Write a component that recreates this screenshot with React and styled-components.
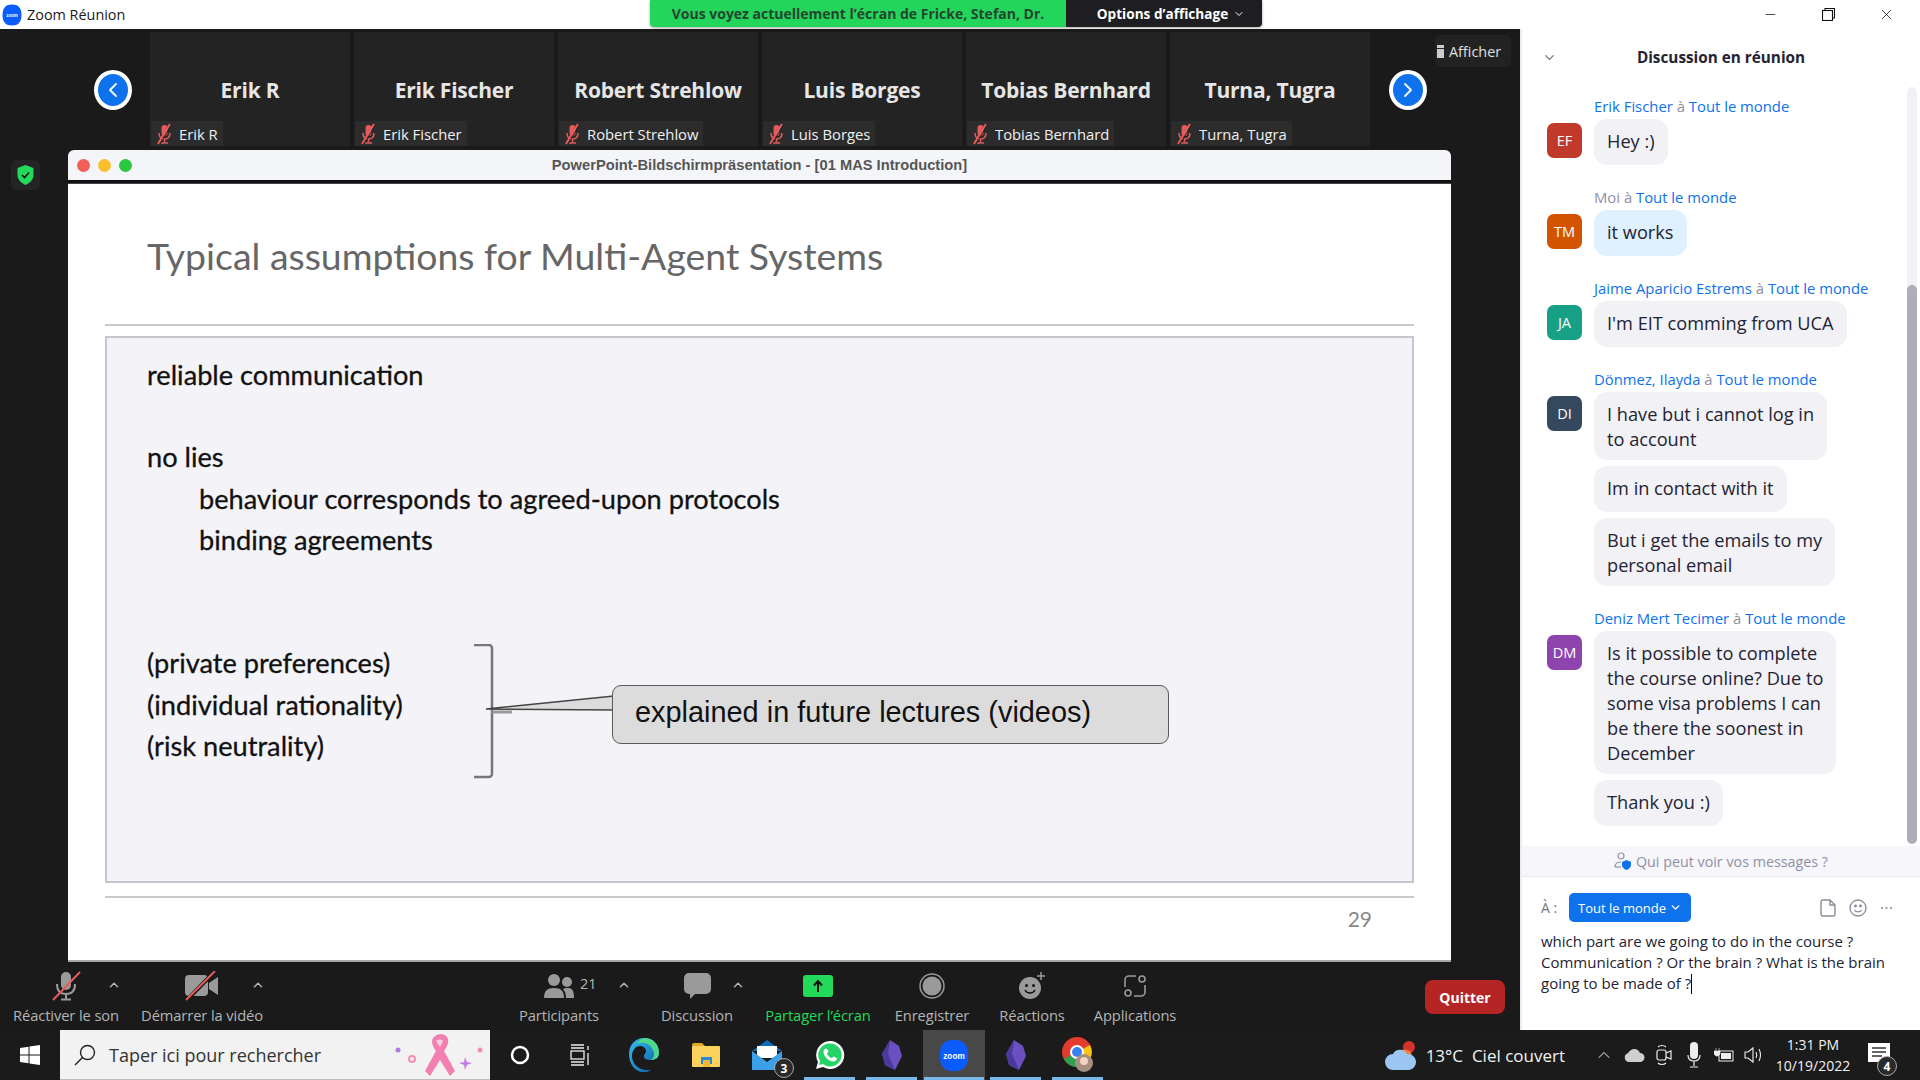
import React from 'react'
import styled, { createGlobalStyle } from 'styled-components'
import { ChevronDown, ChevronUp, ChevronLeft, ChevronRight, Minus, X } from 'lucide-react'

const ui = '"Open Sans", "Noto Sans", "Liberation Sans", sans-serif'
const slideFont = 'Lato, "Open Sans", sans-serif'

const Global = createGlobalStyle`
  html, body { margin: 0; padding: 0; background: #1a1a1a; }
  * { box-sizing: border-box; }
  body { font-family: ${ui}; overflow: hidden; }
`

const Page = styled.div`
  width: 1920px;
  height: 1080px;
  display: flex;
  flex-direction: column;
  overflow: hidden;
`

const TitleBar = styled.header`
  height: 29px;
  flex: none;
  background: #fff;
  display: flex;
  align-items: flex-start;
`
const AppName = styled.div`
  width: 650px;
  height: 29px;
  display: flex;
  align-items: center;
  gap: 5px;
  padding-left: 2px;
  font-size: 14.4px;
  color: #1a1a1a;
`
const Banner = styled.div`
  height: 27px;
  display: flex;
  border-radius: 0 0 4px 4px;
  overflow: hidden;
  box-shadow: 0 1px 3px rgba(0, 0, 0, 0.35);
  font-size: 14px;
  font-weight: 700;
`
const BannerGreen = styled.div`
  width: 416px;
  background: #23d55b;
  color: #24452f;
  display: flex;
  align-items: center;
  justify-content: center;
`
const BannerDark = styled.div`
  width: 196px;
  background: #1e1e22;
  color: #fff;
  display: flex;
  align-items: center;
  justify-content: center;
  gap: 5px;
  padding-left: 14px;
  font-size: 13.6px;
`
const WinControls = styled.div`
  margin-left: auto;
  margin-right: 5px;
  display: flex;
  height: 29px;
`
const WinButton = styled.div`
  width: 58px;
  height: 29px;
  display: flex;
  align-items: center;
  justify-content: center;
  color: #111;
`

const Body = styled.div`
  flex: 1;
  display: flex;
  min-height: 0;
`
const Meeting = styled.main`
  width: 1520px;
  background: #1a1a1a;
  display: flex;
  flex-direction: column;
  position: relative;
`

const ThumbRow = styled.section`
  height: 121px;
  flex: none;
  display: flex;
  align-items: flex-start;
  padding: 3px 0 0 94px;
`
const Arrow = styled.div`
  width: 38px;
  height: 40px;
  margin: 38px 18px 0 0;
  flex: none;
  border-radius: 50%;
  border: 4px solid #fff;
  background: #0e72ed;
  color: #fff;
  display: flex;
  align-items: center;
  justify-content: center;
`
const Tiles = styled.div`
  display: flex;
  gap: 4px;
  margin-right: 19px;
`
const Tile = styled.div`
  width: 200px;
  height: 114px;
  background: #232323;
  display: flex;
  flex-direction: column;
`
const TileName = styled.div`
  flex: 1;
  display: flex;
  align-items: center;
  justify-content: center;
  padding-top: 26px;
  color: #e6e6e6;
  font-size: 21px;
  font-weight: 700;
  letter-spacing: -0.2px;
`
const Chip = styled.div`
  align-self: flex-start;
  height: 25px;
  display: flex;
  align-items: center;
  gap: 6px;
  padding: 0 5px;
  margin-left: 1px;
  background: #2c2c2c;
  color: #f0f0f0;
  font-size: 14.8px;
`
const ShowButton = styled.div`
  margin: 3px 0 0 -10px;
  width: 76px;
  height: 32px;
  background: #222;
  border-radius: 6px;
  color: #e0e0e0;
  font-size: 14.4px;
  display: flex;
  align-items: center;
  gap: 5px;
  padding-left: 2px;
`
const Bars = styled.span`
  width: 7px;
  height: 13px;
  border-top: 3px solid #ccc;
  background: #ccc;
  box-shadow: inset 0 1px 0 #222;
`
const ShieldBadge = styled.div`
  position: absolute;
  left: 11px;
  top: 131px;
  width: 29px;
  height: 30px;
  background: #242424;
  border-radius: 6px;
  display: flex;
  align-items: center;
  justify-content: center;
`

const Stage = styled.section`
  height: 812px;
  flex: none;
  padding-left: 68px;
`
const ShareWindow = styled.div`
  width: 1383px;
  height: 812px;
  display: flex;
  flex-direction: column;
  border-bottom: 2px solid #a8a8a8;
`
const MacBar = styled.div`
  height: 30px;
  flex: none;
  background: #f4f5f9;
  border-radius: 6px 6px 0 0;
  display: flex;
  align-items: center;
  gap: 8px;
  padding-left: 9px;
  position: relative;
`
const Light = styled.span`
  width: 13px;
  height: 13px;
  border-radius: 50%;
  background: ${p => p.$c};
`
const MacTitle = styled.div`
  position: absolute;
  left: 0;
  right: 0;
  text-align: center;
  font: 700 14.7px "Liberation Sans", sans-serif;
  color: #555;
`
const MacLine = styled.div`
  height: 4px;
  flex: none;
  background: #111;
  border-bottom: 1px solid #444;
`
const Slide = styled.div`
  flex: 1;
  background: #fff;
  padding: 0 37px;
  display: flex;
  flex-direction: column;
  font-family: ${slideFont};
`
const SlideTitle = styled.h1`
  margin: 49px 0 0 42px;
  font-size: 37.4px;
  line-height: 46px;
  font-weight: 400;
  color: #666;
`
const Rule = styled.div`
  height: 2px;
  flex: none;
  margin-top: ${p => p.$top}px;
  background: #c9c9c9;
`
const Box = styled.div`
  height: 547px;
  flex: none;
  margin-top: 10px;
  padding: 16px 0 0 40px;
  border: 2px solid #c6c6cc;
  background: #f3f3f8;
`
const Line = styled.div`
  height: 41.2px;
  line-height: 41.2px;
  padding-left: ${p => p.$indent || 0}px;
  font-size: 27.2px;
  color: #111;
  -webkit-text-stroke: 0.3px #111;
`
const CalloutRow = styled.div`
  display: flex;
  align-items: flex-start;
`
const CalloutLines = styled.div`
  width: 327px;
  flex: none;
`
const Callout = styled.div`
  width: 557px;
  height: 59px;
  margin: 43px 0 0 -2px;
  padding: 0 0 4px 22px;
  background: #dcdcdc;
  border: 1.5px solid #5a5a5a;
  border-radius: 9px;
  display: flex;
  align-items: center;
  font: 400 28.9px "Liberation Sans", sans-serif;
  color: #111;
`
const PageNo = styled.div`
  margin: 8px 42px 0 0;
  text-align: right;
  font-size: 21px;
  color: #888;
`

const Toolbar = styled.nav`
  height: 68px;
  flex: none;
  display: flex;
  align-items: flex-start;
`
const Tool = styled.div`
  width: ${p => p.$w}px;
  margin-left: ${p => p.$ml || 0}px;
  height: 68px;
  flex: none;
  position: relative;
  display: flex;
  flex-direction: column;
  align-items: center;
`
const ToolIcon = styled.div`
  height: 43px;
  display: flex;
  align-items: center;
  padding-top: 4px;
`
const ToolLabel = styled.div`
  font-size: 14.7px;
  line-height: 20px;
  white-space: nowrap;
  color: ${p => (p.$on ? '#23d959' : '#b4b4b4')};
  letter-spacing: -0.1px;
`
const ToolCaret = styled.span`
  position: absolute;
  left: ${p => p.$x}px;
  top: 16px;
  color: #b4b4b4;
  display: flex;
`
const ToolCount = styled.span`
  position: absolute;
  left: ${p => p.$x}px;
  top: 12px;
  font-size: 14.5px;
  color: #b4b4b4;
`
const QuitButton = styled.div`
  margin: 18px 15px 0 auto;
  width: 80px;
  height: 34px;
  border-radius: 8px;
  background: #b52524;
  color: #fff;
  font-size: 14px;
  font-weight: 700;
  display: flex;
  align-items: center;
  justify-content: center;
`

const Chat = styled.aside`
  width: 400px;
  background: #fff;
  border-left: 2px solid #ececf1;
  display: flex;
  flex-direction: column;
  position: relative;
`
const ChatHead = styled.div`
  height: 56px;
  flex: none;
  display: flex;
  align-items: center;
  justify-content: center;
  font-size: 15.3px;
  font-weight: 700;
  color: #232333;
  position: relative;
`
const HeadCaret = styled.span`
  position: absolute;
  left: 20px;
  top: 21px;
  color: #6e7680;
  display: flex;
`
const MessageList = styled.div`
  flex: 1;
  padding: 12px 0 0 25px;
  display: flex;
  flex-direction: column;
  gap: 23px;
`
const Group = styled.div`
  display: flex;
  gap: 12px;
`
const Avatar = styled.div`
  width: 35px;
  height: 35px;
  flex: none;
  margin-top: 26px;
  border-radius: 7px;
  background: ${p => p.$c};
  color: #fff;
  font-size: 14.5px;
  display: flex;
  align-items: center;
  justify-content: center;
`
const GroupBody = styled.div`
  display: flex;
  flex-direction: column;
  align-items: flex-start;
  gap: 6px;
`
const Sender = styled.div`
  font-size: 14.85px;
  line-height: 18px;
  margin-bottom: -2px;
  white-space: nowrap;
  color: #0e72ed;
`
const Grey = styled.span`
  color: #8f8fa3;
`
const Bubble = styled.div`
  min-height: 46px;
  padding: 10px 13px 8px;
  white-space: pre-line;
  border-radius: 13px;
  font-size: 18.2px;
  line-height: 25px;
  color: #232333;
  background: ${p => (p.$mine ? '#dff0ff' : '#f1f1f6')};
`
const ScrollTrack = styled.div`
  position: absolute;
  top: 58px;
  right: 3px;
  width: 10px;
  height: 757px;
  border-radius: 5px;
  background: #f2f2f6;
  display: flex;
  align-items: flex-end;
`
const ScrollThumb = styled.div`
  width: 10px;
  height: 559px;
  border-radius: 5px;
  background: #aeaeb8;
`
const PrivacyBand = styled.div`
  height: 31px;
  flex: none;
  background: #f7f7fb;
  border-bottom: 1px solid #e8e8ee;
  display: flex;
  align-items: center;
  justify-content: center;
  gap: 4px;
  font-size: 14.3px;
  color: #8f8fa3;
`
const Compose = styled.div`
  height: 153px;
  flex: none;
  padding: 16px 0 0 19px;
`
const ToRow = styled.div`
  display: flex;
  align-items: center;
  height: 29px;
  font-size: 14px;
  color: #6e7680;
`
const ToLabel = styled.span`
  width: 28px;
`
const ToButton = styled.div`
  width: 122px;
  height: 29px;
  border-radius: 5px;
  background: #0e72ed;
  color: #fff;
  font-size: 13px;
  display: flex;
  align-items: center;
  justify-content: center;
  gap: 3px;
`
const ToTools = styled.div`
  margin-left: auto;
  display: flex;
  align-items: center;
  gap: 13px;
  margin-right: 27px;
  color: #8a8a98;
`
const Draft = styled.div`
  margin-top: 9px;
  white-space: pre-line;
  font-size: 15px;
  line-height: 21px;
  color: #232333;
`
const Cursor = styled.span`
  display: inline-block;
  width: 1px;
  height: 20px;
  background: #000;
  vertical-align: -5px;
`

const Taskbar = styled.footer`
  height: 50px;
  flex: none;
  background: #1b1b1b;
  display: flex;
  align-items: stretch;
`
const StartCell = styled.div`
  width: 60px;
  display: flex;
  align-items: center;
  justify-content: center;
`
const SearchBox = styled.div`
  width: 430px;
  background: #f2f2f2;
  border-bottom: 1px solid #bdbdbd;
  display: flex;
  align-items: center;
  gap: 13px;
  padding-left: 14px;
  font-size: 18px;
  color: #333;
  position: relative;
`
const SearchArt = styled.span`
  position: absolute;
  right: 6px;
  top: 3px;
  display: flex;
`
const PlainCell = styled.div`
  width: 60px;
  display: flex;
  align-items: center;
  justify-content: center;
  margin-right: ${p => p.$mr || 0}px;
`
const AppCell = styled.div`
  width: 62px;
  position: relative;
  display: flex;
  align-items: center;
  justify-content: center;
  background: ${p => (p.$active ? '#484848' : 'transparent')};
  &::after {
    content: '';
    display: ${p => (p.$running ? 'block' : 'none')};
    position: absolute;
    bottom: 0;
    left: ${p => (p.$active ? 1 : 5)}px;
    right: ${p => (p.$active ? 1 : 6)}px;
    height: 3px;
    background: #76b9ed;
  }
`
const CountDot = styled.span`
  position: absolute;
  right: ${p => p.$r}px;
  bottom: ${p => p.$b}px;
  width: 20px;
  height: 20px;
  border-radius: 50%;
  background: #2a2a2a;
  border: 1px solid #aaa;
  color: #fff;
  font-size: 12px;
  font-weight: 700;
  display: flex;
  align-items: center;
  justify-content: center;
`
const Tray = styled.div`
  margin-left: auto;
  display: flex;
  align-items: center;
  padding-right: 19px;
  color: #f2f2f2;
`
const Weather = styled.div`
  display: flex;
  align-items: center;
  gap: 9px;
  margin-right: 24px;
  font-size: 17px;
  white-space: pre;
`
const TrayCell = styled.div`
  width: 30px;
  display: flex;
  align-items: center;
  justify-content: center;
`
const Clock = styled.div`
  width: 88px;
  text-align: center;
  font-size: 14px;
  line-height: 21px;
`
const NoteCell = styled.div`
  width: 44px;
  height: 50px;
  position: relative;
  display: flex;
  align-items: center;
  justify-content: center;
`

const ZoomLogo = ({ size = 20, label }) => (
  <svg width={size} height={size * 1.1} viewBox="0 0 20 22">
    <path d="M10 .5c6 0 9.500 3 9.500 10.500S16 21.500 10 21.500 .5 18.500 .5 11 4 .5 10 .5z" fill="#0b5cff" />
    <text x="10" y="13" textAnchor="middle" fontSize={label ? 5.500 : 4.500} fontFamily="Liberation Sans" fontWeight="700" fill="#fff">zoom</text>
  </svg>
)

const MutedMini = () => (
  <svg width="17" height="22" viewBox="0 0 17 22" fill="none">
    <rect x="5.500" y="2" width="6" height="11" rx="3" fill="#e35b5b" />
    <path d="M3 10c0 4 2 6 5.500 6s5.500-2 5.500-6M8.500 16v3M5 20h7" stroke="#e35b5b" strokeWidth="1.500" />
    <path d="M2 21L14 1" stroke="#e35b5b" strokeWidth="2" />
    <path d="M4 21L16 1" stroke="#232323" strokeWidth="1" />
  </svg>
)

const MicOff = () => (
  <svg width="30" height="30" viewBox="0 0 30 30" fill="none">
    <rect x="10" y="1" width="10" height="18" rx="5" fill="#9a9a9a" />
    <path d="M6 13c0 6 3 10 9 10s9-4 9-10M15 23v5M10 28.500h10" stroke="#9a9a9a" strokeWidth="2" />
    <path d="M2 29L29 1" stroke="#e35b5b" strokeWidth="2" />
  </svg>
)
const VideoOff = () => (
  <svg width="34" height="30" viewBox="0 0 34 30" fill="none">
    <rect x="0" y="4" width="23" height="21" rx="4" fill="#9a9a9a" />
    <path d="M24 12l9-6v18l-9-6z" fill="#9a9a9a" />
    <path d="M1 30L30 0" stroke="#1a1a1a" strokeWidth="4" />
    <path d="M1 29L30 0" stroke="#e35b5b" strokeWidth="2" />
  </svg>
)
const People = () => (
  <svg width="30" height="24" viewBox="0 0 30 24">
    <circle cx="10" cy="6" r="6" fill="#9a9a9a" />
    <path d="M0 24c0-7 3-10 10-10s10 3 10 10z" fill="#9a9a9a" />
    <circle cx="23" cy="8" r="5" fill="#9a9a9a" />
    <path d="M22 24c0-4-1-7-3-9 1-1 3-1 5-1 5 0 6 4 6 10z" fill="#9a9a9a" />
  </svg>
)
const ChatIcon = () => (
  <svg width="27" height="26" viewBox="0 0 27 26">
    <path d="M5 0h17a5 5 0 015 5v11a5 5 0 01-5 5H11l-5 5v-5H5a5 5 0 01-5-5V5a5 5 0 015-5z" fill="#9a9a9a" />
  </svg>
)
const ShareIcon = () => (
  <svg width="30" height="22" viewBox="0 0 30 22">
    <rect width="30" height="22" rx="3" fill="#23d959" />
    <path d="M15 17V7M11 10.500L15 6l4 4.500" stroke="#111" strokeWidth="2" fill="none" />
  </svg>
)
const RecordIcon = () => (
  <svg width="26" height="26" viewBox="0 0 26 26" fill="none">
    <circle cx="13" cy="13" r="12" stroke="#9a9a9a" strokeWidth="1.500" />
    <circle cx="13" cy="13" r="9.500" fill="#9a9a9a" />
  </svg>
)
const ReactIcon = () => (
  <svg width="28" height="28" viewBox="0 0 28 28" fill="none">
    <circle cx="12" cy="16" r="11" fill="#9a9a9a" />
    <circle cx="8.500" cy="13.500" r="1.500" fill="#111" />
    <circle cx="15.500" cy="13.500" r="1.500" fill="#111" />
    <path d="M7 18c2 4 8 4 10 0" stroke="#111" strokeWidth="1.500" />
    <path d="M23 0v8M19 4h8" stroke="#9a9a9a" strokeWidth="1.500" />
  </svg>
)
const AppsIcon = () => (
  <svg width="22" height="24" viewBox="0 0 22 24" fill="none" stroke="#9a9a9a" strokeWidth="1.600">
    <path d="M12 2H5a4 4 0 00-4 4v7M10 22h7a4 4 0 004-4v-7" />
    <circle cx="18" cy="5" r="3" />
    <circle cx="4" cy="19" r="3" />
  </svg>
)

const Shield = () => (
  <svg width="17" height="20" viewBox="0 0 17 20">
    <path d="M8.500 0l8 3v7c0 5-4 8-8 10-4-2-8-5-8-10V3z" fill="#23d959" />
    <path d="M5 10l2.500 2.500L12 7.500" stroke="#111" strokeWidth="1.600" fill="none" />
  </svg>
)

const WinLogo = () => (
  <svg width="20" height="20" viewBox="0 0 20 20" fill="#fff">
    <path d="M0 3l8.500-1.200v7.700H0zM9.500 1.600L20 0v9.500H9.500zM0 10.500h8.500v7.700L0 17zM9.500 10.500H20V20L9.500 18.400z" />
  </svg>
)
const Magnifier = () => (
  <svg width="22" height="22" viewBox="0 0 22 22" fill="none" stroke="#222" strokeWidth="1.400">
    <circle cx="13.500" cy="8.500" r="7" />
    <path d="M8.500 13.500L1 21" />
  </svg>
)
const Ribbon = () => (
  <svg width="104" height="44" viewBox="0 0 104 44">
    <circle cx="18" cy="17" r="2.500" fill="#b07be0" />
    <circle cx="32" cy="26" r="3" fill="none" stroke="#f48fb1" strokeWidth="2" />
    <g transform="translate(14 0)">
      <path d="M40 4c4-4 10-4 13 0 3 4 0 10-3 14l11 20-5 5-10-16-10 16-5-5 11-20c-3-4-6-10-2-14z" fill="#f27fb0" />
      <path d="M42 8c2-2 5-2 7 0l-3 6z" fill="#fbd0e0" />
    </g>
    <path d="M85 24l2 5 5 1-5 2-2 5-1-5-5-2 5-1z" fill="#c57be8" />
    <circle cx="100" cy="17" r="2.500" fill="#f48fb1" />
  </svg>
)
const Ring = () => (
  <svg width="20" height="20" viewBox="0 0 20 20" fill="none">
    <circle cx="10" cy="10" r="8" stroke="#fff" strokeWidth="2.500" />
  </svg>
)
const TaskView = () => (
  <svg width="20" height="22" viewBox="0 0 20 22" fill="none" stroke="#eee" strokeWidth="1.300">
    <path d="M1 1h13M1 4h13M1 18h13M1 21h13" />
    <rect x="1" y="7" width="13" height="8" />
    <path d="M18 2v4M18 9v12" />
  </svg>
)
const Edge = () => (
  <svg width="30" height="34" viewBox="0 0 30 34">
    <defs>
      <linearGradient id="edgeA" x1="0" y1="0" x2="1" y2="1">
        <stop offset="0" stopColor="#35c1f1" />
        <stop offset="1" stopColor="#0c59a4" />
      </linearGradient>
    </defs>
    <path d="M15 0c9 0 15 6 15 15 0 5-4 7-8 7-4 0-7-1-7-4 0-2 2-2 2-5 0-3-3-5-6-5-5 0-8 5-8 10 0 8 7 14 15 14 2 0 4 0 5-1-3 3-6 3-9 3C6 34 0 26 0 16 0 7 6 0 15 0z" fill="url(#edgeA)" />
    <path d="M15 0c9 0 15 6 15 15 0 5-4 7-8 7 3-2 4-6 2-10C21 5 14 3 8 6c2-3 4-6 7-6z" fill="#4fd88a" />
  </svg>
)
const Folder = () => (
  <svg width="28" height="24" viewBox="0 0 28 24">
    <path d="M0 2a2 2 0 012-2h8l3 3H0z" fill="#e5a826" />
    <rect y="3" width="28" height="21" rx="1" fill="#fbd35c" />
    <rect x="9" y="14" width="11" height="7" fill="#2b88d8" />
    <rect x="11" y="17" width="7" height="7" fill="#f2b632" />
  </svg>
)
const Mail = () => (
  <svg width="32" height="30" viewBox="0 0 32 30">
    <path d="M15 0l15 11H0z" fill="#0f6cbd" />
    <rect x="5" y="6" width="20" height="12" fill="#fff" />
    <path d="M0 11l15 11 15-11v19H0z" fill="#3aa0e8" />
  </svg>
)
const Whatsapp = () => (
  <svg width="30" height="30" viewBox="0 0 30 30">
    <path d="M15 1a14 14 0 00-12 21L1 29l7-2A14 14 0 1015 1z" fill="#fff" />
    <path d="M15 3.500A11.500 11.500 0 005 21l-1 4 4-1A11.500 11.500 0 1015 3.500z" fill="#25d366" />
    <path d="M11 8.500c-1 0-2.500 1.500-2.500 3.500 0 4 5 9.500 10 9.500 2 0 3.500-1.500 3.500-3 0-.5-3-2-3.500-2s-1 1.500-1.800 1.500c-1.500 0-4.700-3-4.700-4.500 0-.7 1.500-1.300 1.500-1.900 0-.6-1.500-3.100-2.500-3.100z" fill="#fff" />
  </svg>
)
const Obsidian = () => (
  <svg width="20" height="30" viewBox="0 0 20 30">
    <path d="M8 0l9 6 3 10-7 14-10-5L0 14z" fill="#6c4fc1" />
    <path d="M8 0l-2 14 7 16-10-5L0 14z" fill="#4a3a9c" />
  </svg>
)
const Chrome = () => (
  <svg width="32" height="36" viewBox="0 0 32 36">
    <circle cx="15" cy="15" r="15" fill="#e33b2e" />
    <path d="M15 15L2 22A15 15 0 0 0 15 30z" fill="#2ca24c" />
    <path d="M15 15l13-7a15 15 0 0 1-13 22z" fill="#f9c516" />
    <circle cx="15" cy="15" r="7" fill="#fff" />
    <circle cx="15" cy="15" r="5" fill="#3b82f0" />
    <circle cx="22" cy="26" r="9" fill="#a89080" />
    <circle cx="22" cy="24" r="4" fill="#f0d5c0" />
  </svg>
)
const Cloud = () => (
  <svg width="32" height="30" viewBox="0 0 32 30">
    <circle cx="24" cy="7" r="6" fill="#d0342c" />
    <path d="M10 16a10 10 0 0116-4l2 8z" fill="#f07a3e" />
    <path d="M8 30a8 8 0 010-16c2-5 11-6 14 0a8 8 0 012 16z" fill="#9cc6f2" />
  </svg>
)
const OneDrive = () => (
  <svg width="21" height="14" viewBox="0 0 21 14">
    <path d="M5 14a4.500 4.500 0 01-1-8.800C6 0 14-1 16 5a4.500 4.500 0 010 9z" fill="#cfcfcf" />
  </svg>
)
const MeetNow = () => (
  <svg width="16" height="24" viewBox="0 0 16 24" fill="none" stroke="#eee" strokeWidth="1.200">
    <rect x="1" y="7" width="9" height="10" rx="2" />
    <path d="M10 10l5-2v8l-5-2M2 4c2-2 6-2 8 0M2 20c2 2 6 2 8 0" />
  </svg>
)
const TrayMic = () => (
  <svg width="14" height="26" viewBox="0 0 14 26" fill="none">
    <rect x="3" y="0" width="8" height="17" rx="4" fill="#eee" />
    <path d="M1 13c0 4 2 6 6 6s6-2 6-6M7 19v5M3 25h8" stroke="#eee" strokeWidth="1.200" />
  </svg>
)
const Battery = () => (
  <svg width="20" height="16" viewBox="0 0 20 16">
    <rect x="5" y="4" width="14" height="10" fill="none" stroke="#eee" />
    <rect x="7" y="6" width="10" height="6" fill="#eee" />
    <path d="M2 1v3M5 1v3M0 4h6v3l-2 2H2L0 7z" fill="#eee" stroke="#eee" strokeWidth=".6" />
  </svg>
)
const Speaker = () => (
  <svg width="20" height="20" viewBox="0 0 20 20" fill="none" stroke="#eee" strokeWidth="1.100">
    <path d="M1 7h3l5-4v14l-5-4H1zM12 7c1 2 1 4 0 6M15 4c2 4 2 8 0 12" />
  </svg>
)
const Note = () => (
  <svg width="22" height="24" viewBox="0 0 22 24" fill="#fff">
    <path d="M0 0h22v19h-7l-4 5v-5H0z" />
    <path d="M4 5h14M4 9h14M4 13h10" stroke="#333" strokeWidth="1.500" />
  </svg>
)
const PrivacyIcon = () => (
  <svg width="18" height="18" viewBox="0 0 18 18" fill="none">
    <circle cx="7" cy="4" r="3" stroke="#8f8fa3" strokeWidth="1.200" />
    <path d="M1 15c0-4 3-5 6-5" stroke="#8f8fa3" strokeWidth="1.200" />
    <path d="M1 15h6" stroke="#8f8fa3" strokeWidth="1.200" />
    <path d="M12.500 8l4.500 2v3c0 2.500-2 4-4.500 5-2.500-1-4.500-2.500-4.500-5v-3z" fill="#0e72ed" />
  </svg>
)
const FileIcon = () => (
  <svg width="16" height="18" viewBox="0 0 16 18" fill="none" stroke="#8a8a98" strokeWidth="1.400">
    <path d="M3 1h7l5 5v9a2 2 0 01-2 2H3a2 2 0 01-2-2V3a2 2 0 012-2zM10 1v5h5" />
  </svg>
)
const SmileIcon = () => (
  <svg width="18" height="18" viewBox="0 0 18 18" fill="none" stroke="#8a8a98" strokeWidth="1.300">
    <circle cx="9" cy="9" r="8" />
    <path d="M5.500 11c1.500 2.500 5.500 2.500 7 0" />
    <circle cx="6.500" cy="7" r=".8" fill="#8a8a98" />
    <circle cx="11.500" cy="7" r=".8" fill="#8a8a98" />
  </svg>
)
const Dots = () => (
  <svg width="13" height="4" viewBox="0 0 13 4" fill="#8a8a98">
    <circle cx="2" cy="2" r="1.100" />
    <circle cx="6.500" cy="2" r="1.100" />
    <circle cx="11" cy="2" r="1.100" />
  </svg>
)
const RestoreIcon = () => (
  <svg width="13" height="13" viewBox="0 0 13 13" fill="none" stroke="#111" strokeWidth="1.100">
    <rect x=".5" y="2.500" width="10" height="10" />
    <path d="M3 2.500V.5h9.500V10h-2" />
  </svg>
)
const BracketSvg = styled.svg`
  flex: none;
  margin-top: 2px;
`
const Bracket = () => (
  <BracketSvg width="140" height="140" viewBox="0 0 140 140" fill="none">
    <path d="M0 1h15a3 3 0 013 3v126a3 3 0 01-3 3H0" stroke="#777" strokeWidth="2.500" />
    <path d="M18 68h20" stroke="#999" strokeWidth="3" />
    <path d="M12 65L141 52v14z" fill="#dcdcdc" />
    <path d="M141 52L12 65l129 1" stroke="#444" strokeWidth="1.500" />
  </BracketSvg>
)

const tiles = ['Erik R', 'Erik Fischer', 'Robert Strehlow', 'Luis Borges', 'Tobias Bernhard', 'Turna, Tugra']

const messages = [
  { who: 'Erik Fischer', ini: 'EF', color: '#c0392b', lines: ['Hey :)'] },
  { who: 'Moi', ini: 'TM', color: '#d35400', mine: true, lines: ['it works'] },
  { who: 'Jaime Aparicio Estrems', ini: 'JA', color: '#16a085', lines: ["I'm EIT comming from UCA"] },
  {
    who: 'Dönmez, Ilayda', ini: 'DI', color: '#34495e',
    lines: ['I have but i cannot log in\nto account', 'Im in contact with it', 'But i get the emails to my\npersonal email'],
  },
  {
    who: 'Deniz Mert Tecimer', ini: 'DM', color: '#8e44ad',
    lines: ['Is it possible to complete\nthe course online? Due to\nsome visa problems I can\nbe there the soonest in\nDecember', 'Thank you :)'],
  },
]

const tools = [
  { label: 'Réactiver le son', w: 132, icon: <MicOff />, caret: 107 },
  { label: 'Démarrer la vidéo', w: 140, icon: <VideoOff />, caret: 119 },
  { label: 'Participants', w: 100, ml: 237, icon: <People />, caret: 108, count: '21', countX: 71 },
  { label: 'Discussion', w: 100, ml: 38, icon: <ChatIcon />, caret: 84 },
  { label: "Partager l’écran", w: 120, ml: 11, icon: <ShareIcon />, on: true },
  { label: 'Enregistrer', w: 90, ml: 9, icon: <RecordIcon /> },
  { label: 'Réactions', w: 90, ml: 10, icon: <ReactIcon /> },
  { label: 'Applications', w: 100, ml: 8, icon: <AppsIcon /> },
]

const apps = [
  { icon: <Edge /> },
  { icon: <Folder /> },
  { icon: <Mail />, badge: '3' },
  { icon: <Whatsapp />, running: true },
  { icon: <Obsidian />, running: true },
  { icon: <ZoomLogo size={30} label />, running: true, active: true },
  { icon: <Obsidian />, running: true },
  { icon: <Chrome />, running: true },
]

export default function App() {
  return (
    <Page>
      <Global />
      <TitleBar>
        <AppName><ZoomLogo />Zoom Réunion</AppName>
        <Banner>
          <BannerGreen>Vous voyez actuellement l’écran de Fricke, Stefan, Dr.</BannerGreen>
          <BannerDark>Options d’affichage <ChevronDown size={12} /></BannerDark>
        </Banner>
        <WinControls>
          <WinButton><Minus size={15} strokeWidth={1.2} /></WinButton>
          <WinButton><RestoreIcon /></WinButton>
          <WinButton><X size={17} strokeWidth={1.1} /></WinButton>
        </WinControls>
      </TitleBar>

      <Body>
        <Meeting>
          <ThumbRow>
            <Arrow><ChevronLeft size={24} strokeWidth={1.8} /></Arrow>
            <Tiles>
              {tiles.map(name => (
                <Tile key={name}>
                  <TileName>{name}</TileName>
                  <Chip><MutedMini />{name}</Chip>
                </Tile>
              ))}
            </Tiles>
            <Arrow><ChevronRight size={24} strokeWidth={1.8} /></Arrow>
            <ShowButton><Bars />Afficher</ShowButton>
          </ThumbRow>
          <ShieldBadge><Shield /></ShieldBadge>

          <Stage>
            <ShareWindow>
              <MacBar>
                <Light $c="#f25f58" />
                <Light $c="#fbbe2e" />
                <Light $c="#29c83f" />
                <MacTitle>PowerPoint-Bildschirmpräsentation - [01 MAS Introduction]</MacTitle>
              </MacBar>
              <MacLine />
              <Slide>
                <SlideTitle>Typical assumptions for Multi-Agent Systems</SlideTitle>
                <Rule $top={45} />
                <Box>
                  <Line>reliable communication</Line>
                  <Line />
                  <Line>no lies</Line>
                  <Line $indent={52}>behaviour corresponds to agreed-upon protocols</Line>
                  <Line $indent={52}>binding agreements</Line>
                  <Line />
                  <Line />
                  <CalloutRow>
                    <CalloutLines>
                      <Line>(private preferences)</Line>
                      <Line>(individual rationality)</Line>
                      <Line>(risk neutrality)</Line>
                    </CalloutLines>
                    <Bracket />
                    <Callout>explained in future lectures (videos)</Callout>
                  </CalloutRow>
                </Box>
                <Rule $top={13} />
                <PageNo>29</PageNo>
              </Slide>
            </ShareWindow>
          </Stage>

          <Toolbar>
            {tools.map(t => (
              <Tool key={t.label} $w={t.w} $ml={t.ml}>
                <ToolIcon>{t.icon}</ToolIcon>
                <ToolLabel $on={t.on}>{t.label}</ToolLabel>
                {t.count && <ToolCount $x={t.countX}>{t.count}</ToolCount>}
                {t.caret && <ToolCaret $x={t.caret}><ChevronUp size={14} strokeWidth={2.5} /></ToolCaret>}
              </Tool>
            ))}
            <QuitButton>Quitter</QuitButton>
          </Toolbar>
        </Meeting>

        <Chat>
          <ChatHead>
            <HeadCaret><ChevronDown size={15} /></HeadCaret>
            Discussion en réunion
          </ChatHead>
          <MessageList>
            {messages.map(m => (
              <Group key={m.who}>
                <Avatar $c={m.color}>{m.ini}</Avatar>
                <GroupBody>
                  <Sender>
                    {m.mine ? <Grey>{m.who}</Grey> : m.who} <Grey>à</Grey> Tout le monde
                  </Sender>
                  {m.lines.map(text => (
                    <Bubble key={text} $mine={m.mine}>{text}</Bubble>
                  ))}
                </GroupBody>
              </Group>
            ))}
          </MessageList>
          <ScrollTrack><ScrollThumb /></ScrollTrack>
          <PrivacyBand><PrivacyIcon />Qui peut voir vos messages ?</PrivacyBand>
          <Compose>
            <ToRow>
              <ToLabel>À :</ToLabel>
              <ToButton>Tout le monde <ChevronDown size={13} strokeWidth={2.5} /></ToButton>
              <ToTools><FileIcon /><SmileIcon /><Dots /></ToTools>
            </ToRow>
            <Draft>
              {'which part are we going to do in the course ?\nCommunication ? Or the brain ? What is the brain\ngoing to be made of ?'}
              <Cursor />
            </Draft>
          </Compose>
        </Chat>
      </Body>

      <Taskbar>
        <StartCell><WinLogo /></StartCell>
        <SearchBox>
          <Magnifier />
          Taper ici pour rechercher
          <SearchArt><Ribbon /></SearchArt>
        </SearchBox>
        <PlainCell><Ring /></PlainCell>
        <PlainCell $mr={3}><TaskView /></PlainCell>
        {apps.map((a, i) => (
          <AppCell key={i} $running={a.running} $active={a.active}>
            {a.icon}
            {a.badge && <CountDot $r={5} $b={2}>{a.badge}</CountDot>}
          </AppCell>
        ))}
        <Tray>
          <Weather><Cloud />13°C  Ciel couvert</Weather>
          <TrayCell><ChevronUp size={20} strokeWidth={1.2} /></TrayCell>
          <TrayCell><OneDrive /></TrayCell>
          <TrayCell><MeetNow /></TrayCell>
          <TrayCell><TrayMic /></TrayCell>
          <TrayCell><Battery /></TrayCell>
          <TrayCell><Speaker /></TrayCell>
          <Clock>1:31 PM<br />10/19/2022</Clock>
          <NoteCell><Note /><CountDot $r={4} $b={4}>4</CountDot></NoteCell>
        </Tray>
      </Taskbar>
    </Page>
  )
}
